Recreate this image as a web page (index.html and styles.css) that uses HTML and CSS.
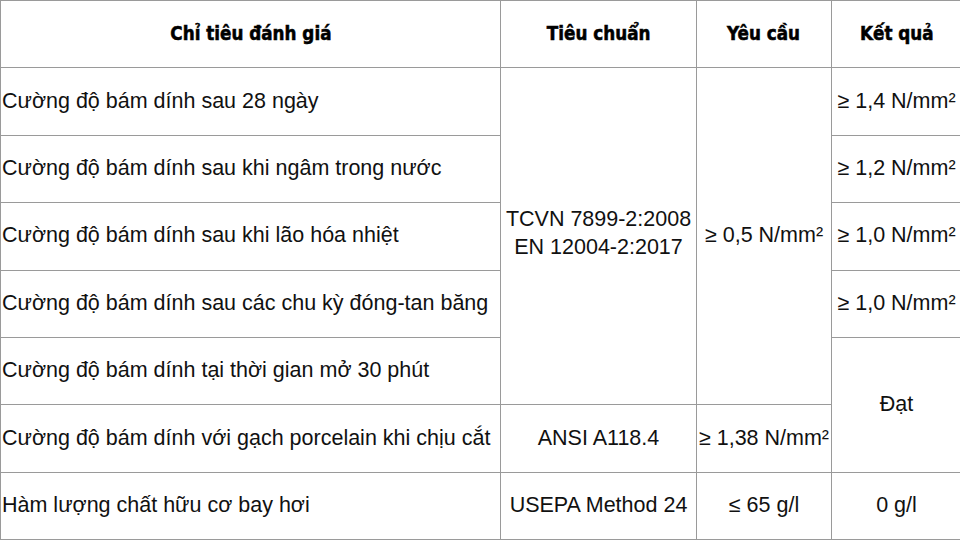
FILE: index.html
```html
<!DOCTYPE html>
<html lang="vi">
<head>
<meta charset="utf-8">
<link rel="stylesheet" href="styles.css">
</head>
<body>
<table class="spec">
  <colgroup>
    <col class="c1"><col class="c2"><col class="c3"><col class="c4">
  </colgroup>
  <thead>
    <tr>
      <th><span class="hd">Chỉ tiêu đánh giá</span></th>
      <th><span class="hd">Tiêu chuẩn</span></th>
      <th><span class="hd">Yêu cầu</span></th>
      <th><span class="hd">Kết quả</span></th>
    </tr>
  </thead>
  <tbody>
    <tr>
      <td class="name">Cường độ bám dính sau 28 ngày</td>
      <td rowspan="5" class="mid"><div class="two">TCVN 7899-2:2008<br>EN 12004-2:2017</div></td>
      <td rowspan="5" class="mid">≥ 0,5 N/mm²</td>
      <td class="mid">≥ 1,4 N/mm²</td>
    </tr>
    <tr>
      <td class="name">Cường độ bám dính sau khi ngâm trong nước</td>
      <td class="mid">≥ 1,2 N/mm²</td>
    </tr>
    <tr>
      <td class="name">Cường độ bám dính sau khi lão hóa nhiệt</td>
      <td class="mid">≥ 1,0 N/mm²</td>
    </tr>
    <tr>
      <td class="name">Cường độ bám dính sau các chu kỳ đóng-tan băng</td>
      <td class="mid">≥ 1,0 N/mm²</td>
    </tr>
    <tr>
      <td class="name">Cường độ bám dính tại thời gian mở 30 phút</td>
      <td rowspan="2" class="mid">Đạt</td>
    </tr>
    <tr>
      <td class="name">Cường độ bám dính với gạch porcelain khi chịu cắt</td>
      <td class="mid">ANSI A118.4</td>
      <td class="mid">≥ 1,38 N/mm²</td>
    </tr>
    <tr>
      <td class="name">Hàm lượng chất hữu cơ bay hơi</td>
      <td class="mid">USEPA Method 24</td>
      <td class="mid">≤ 65 g/l</td>
      <td class="mid">0 g/l</td>
    </tr>
  </tbody>
</table>
</body>
</html>
```
FILE: styles.css
```css
html, body {
  margin: 0;
  padding: 0;
  background: #ffffff;
}
body {
  width: 960px;
  height: 540px;
  overflow: hidden;
  font-family: "Liberation Sans", Arial, sans-serif;
  color: #111;
}
.spec {
  border-collapse: collapse;
  table-layout: fixed;
  width: 961px;
}
.c1 { width: 500px; }
.c2 { width: 196px; }
.c3 { width: 135px; }
.c4 { width: 130px; }
.spec th, .spec td {
  border: 1px solid #9a9a9a;
  padding: 0 0 2px 0;
  height: 67.4px;
  box-sizing: border-box;
}
.spec th {
  font-family: "DejaVu Sans", "Liberation Sans", sans-serif;
  font-weight: bold;
  font-size: 20px;
  text-align: center;
  color: #000;
}
.hd {
  display: inline-block;
  transform: scaleX(0.84);
  -webkit-text-stroke: 0.6px #000;
}
.spec td {
  font-size: 21.5px;
  line-height: 28px;
}
.name {
  text-align: left;
  padding-left: 1px !important;
  white-space: nowrap;
}
.mid {
  text-align: center;
  white-space: nowrap;
}
.two {
  padding-bottom: 4px;
}
```
